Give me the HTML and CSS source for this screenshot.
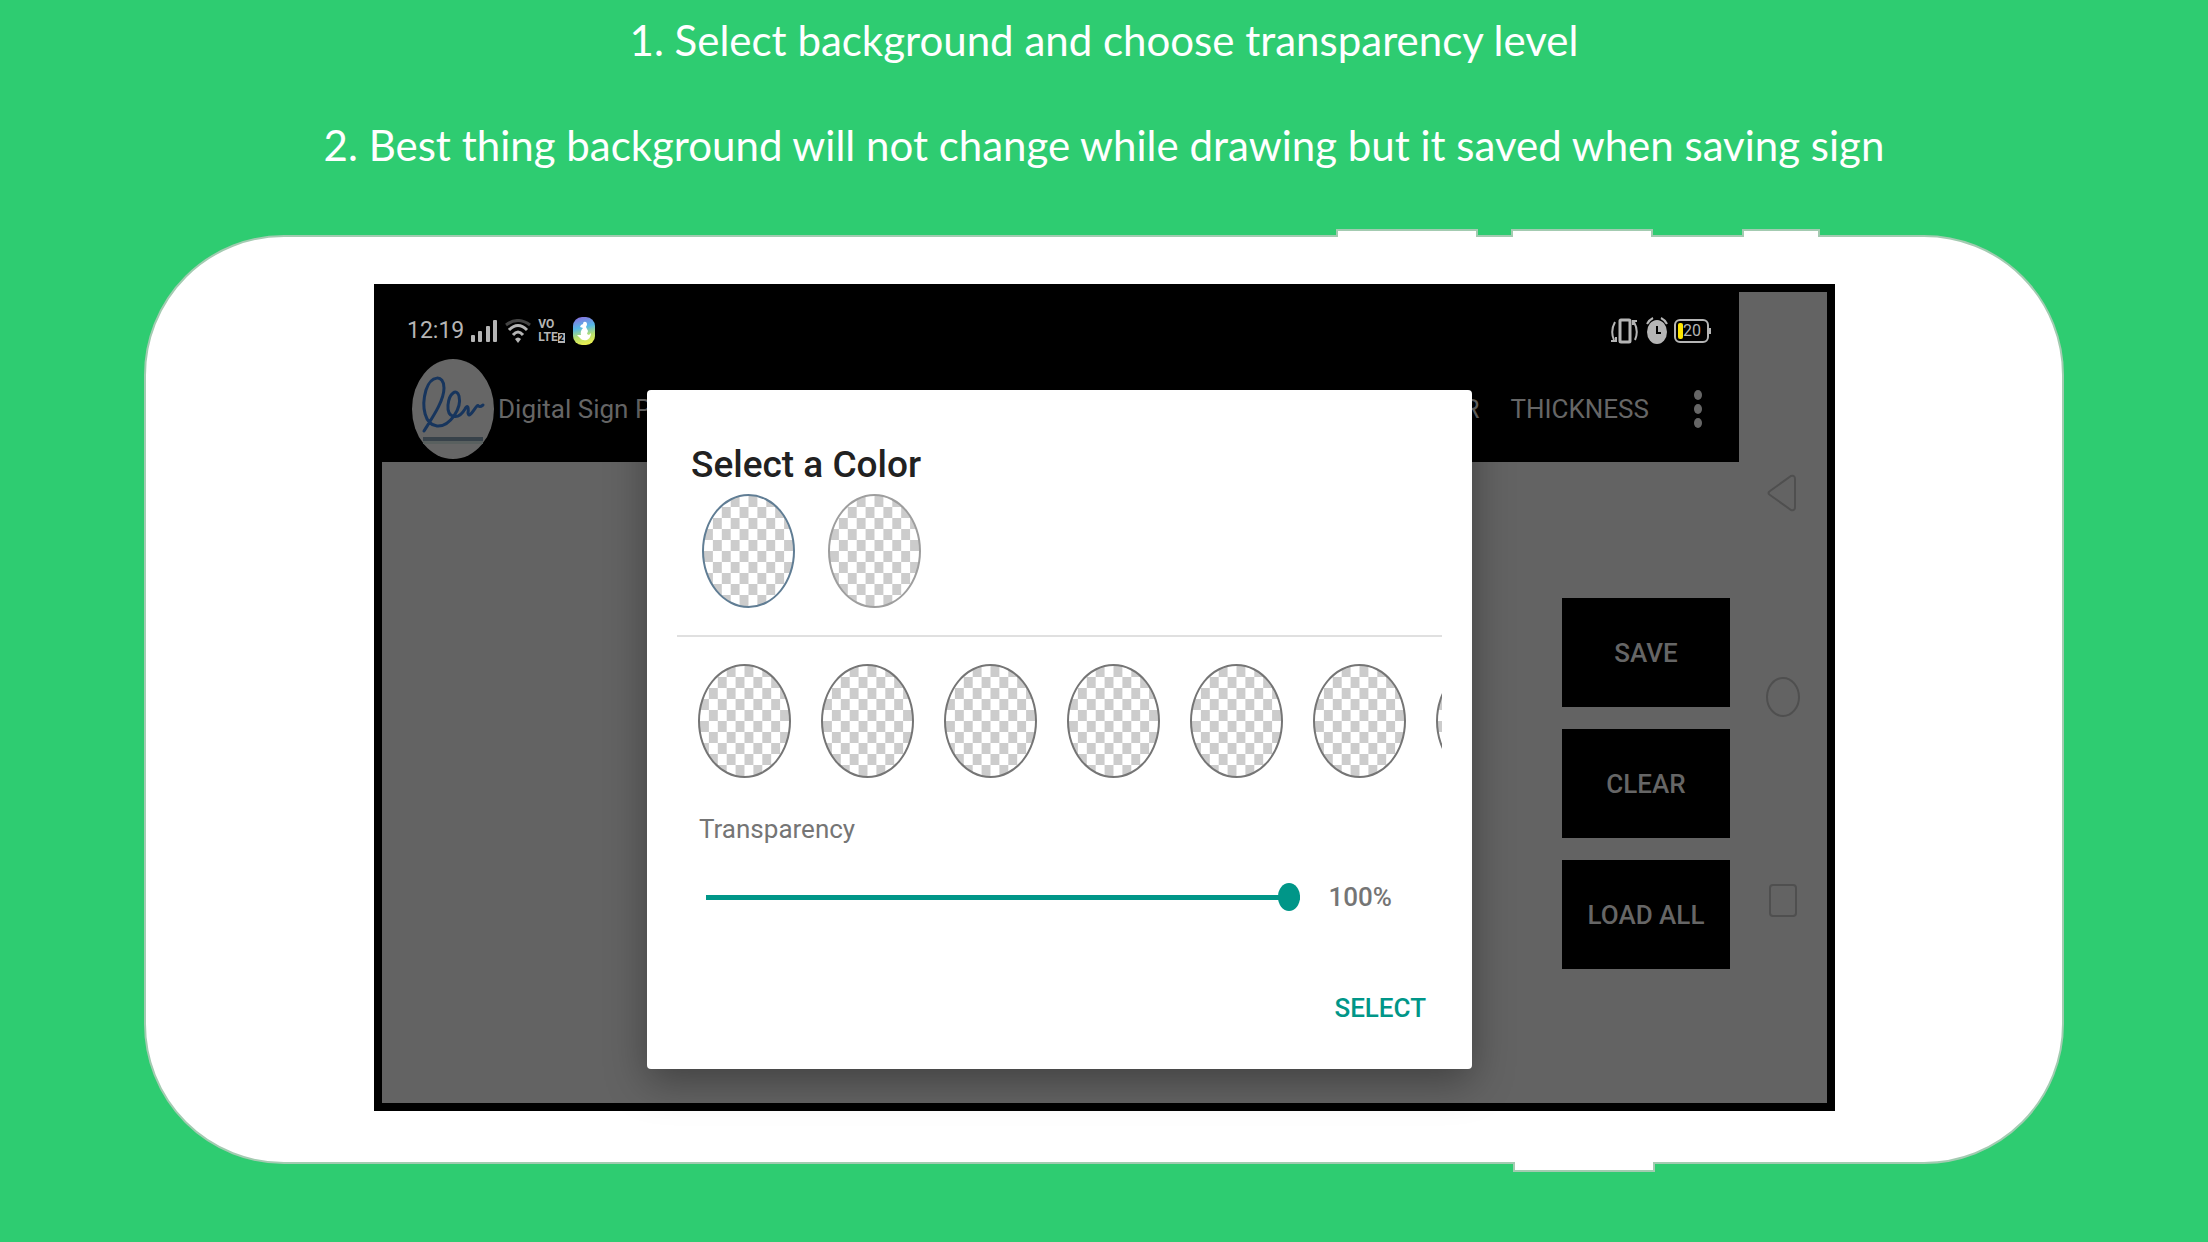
FILE: index.html
```html
<!DOCTYPE html>
<html lang="en">
  <head>
    <meta charset="utf-8">
    <title>Digital Sign Pad</title>
    <link rel="stylesheet" href="styles.css">
  </head>
  <body>
    <header class="intro">
      <p>1. Select background and choose transparency level</p>
      <p>2. Best thing background will not change while drawing but it saved when saving sign</p>
    </header>

    <main class="device">
      <div class="keys keys-top"><span class="key"></span><span class="key"></span><span class="key key-small"></span></div>
      <div class="phone">
        <div class="screen">
          <div class="app">
            <div class="statusbar">
              <span class="time">12:19</span>
              <svg class="signal" width="28" height="24" viewBox="0 0 28 24" fill="#b5b5b5">
                <rect x="1" y="16" width="4" height="7" rx="1"/><rect x="8" y="12" width="4" height="11" rx="1"/>
                <rect x="16" y="7" width="4" height="16" rx="1"/><rect x="23" y="1" width="4" height="22" rx="1"/>
              </svg>
              <svg class="wifi" width="26" height="24" viewBox="0 0 26 24" fill="none" stroke-width="3">
                <path stroke="#444" d="M1 6Q13-3 25 6"/>
                <path stroke="#b5b5b5" d="M4 11Q13 2 22 11M8 16Q13 10 18 16"/>
                <path fill="#b5b5b5" d="M10 20Q13 17 16 20L13 24z"/>
              </svg>
              <span class="volte">VO<br>LTE<b>2</b></span>
              <svg class="app-badge" width="22" height="28" viewBox="0 0 22 28">
                <defs>
                  <linearGradient id="rainbow" x1="0.2" y1="0" x2="0.4" y2="1">
                    <stop offset="0" stop-color="#8a6fe0"/><stop offset=".4" stop-color="#55b8e8"/>
                    <stop offset=".7" stop-color="#b4e070"/><stop offset="1" stop-color="#e8ee50"/>
                  </linearGradient>
                </defs>
                <rect width="22" height="28" rx="9" fill="url(#rainbow)"/>
                <path fill="#fff" d="M8 8 10 7Q10 4 13 5 15 7 13 10L15 14 14 17 16 18 18 16Q18 21 14 23 9 24 7 21L4 18 8 18Q7 14 10 11L7 10z"/>
              </svg>
              <span class="spacer"></span>
              <svg class="vibrate" width="27" height="26" viewBox="0 0 27 26" fill="none" stroke="#b5b5b5" stroke-width="2">
                <rect x="9" y="2" width="10" height="22" rx="1" stroke-width="3"/>
                <path d="M4 4Q-1 13 3 22M23 4Q28 13 24 22M0 23h5v-4M22 7V3h4"/>
              </svg>
              <svg class="alarm" width="22" height="28" viewBox="0 0 22 28">
                <ellipse cx="11" cy="15" rx="10" ry="12" fill="#b5b5b5"/>
                <path d="M1 7Q3 3 7 1M15 1Q19 3 21 7" fill="none" stroke="#b5b5b5" stroke-width="2"/>
                <path d="M11 9v7h4" fill="none" stroke="#000" stroke-width="2"/>
              </svg>
              <span class="battery">20</span>
            </div>

            <div class="toolbar">
              <svg class="logo" width="82" height="100" viewBox="0 0 82 100">
                <ellipse cx="41" cy="50" rx="41" ry="50" fill="#666"/>
                <path d="M12 72C18 62 32 43 32 29C32 15 19 16 14 31C9 48 13 66 25 67C38 68 50 49 47 37C45 29 37 34 36 46C35 59 46 62 53 50C55 46 57 47 56 54C57 60 62 50 65 47C67 45 66 50 71 46" fill="none" stroke="#17355d" stroke-width="3" stroke-linecap="round"/>
                <rect x="11" y="78" width="60" height="4" fill="#38424a"/>
                <rect x="11" y="82" width="60" height="3" fill="#59605f"/>
              </svg>
              <span class="title">Digital Sign Pad</span>
              <button class="menu">COLOR</button>
              <button class="menu">THICKNESS</button>
              <button class="more" aria-label="More options">
                <svg width="10" height="38" viewBox="0 0 10 38" fill="#666"><ellipse cx="5" cy="5" rx="4" ry="5"/><ellipse cx="5" cy="19" rx="4" ry="5"/><ellipse cx="5" cy="33" rx="4" ry="5"/></svg>
              </button>
            </div>

            <div class="canvas">
              <button class="action">SAVE</button>
              <button class="action">CLEAR</button>
              <button class="action">LOAD ALL</button>
            </div>

            <div class="overlay">
              <section class="dialog" role="dialog" aria-labelledby="dialog-title">
                <h1 id="dialog-title">Select a Color</h1>
                <div class="picked">
                  <button class="swatch active" aria-label="Current color"></button>
                  <button class="swatch light" aria-label="New color"></button>
                </div>
                <div class="palette">
                  <button class="swatch" aria-label="Color 1"></button>
                  <button class="swatch" aria-label="Color 2"></button>
                  <button class="swatch" aria-label="Color 3"></button>
                  <button class="swatch" aria-label="Color 4"></button>
                  <button class="swatch" aria-label="Color 5"></button>
                  <button class="swatch" aria-label="Color 6"></button>
                  <button class="swatch" aria-label="Color 7"></button>
                </div>
                <label class="slider-label" for="transparency">Transparency</label>
                <div class="slider">
                  <input type="range" id="transparency" min="0" max="100" value="100">
                  <output for="transparency">100%</output>
                </div>
                <button class="select">SELECT</button>
              </section>
            </div>
          </div>

          <nav class="navbar">
            <button aria-label="Back"><svg width="34" height="40" viewBox="0 0 34 40"><path d="M4 18 25 3Q29 2 29 6V34Q29 38 25 37L4 22Q1 20 4 18z"/></svg></button>
            <button aria-label="Home"><svg width="34" height="40" viewBox="0 0 34 40"><ellipse cx="17" cy="20" rx="16" ry="19"/></svg></button>
            <button aria-label="Recent"><svg width="34" height="40" viewBox="0 0 34 40"><rect x="4" y="4" width="26" height="31" rx="3"/></svg></button>
          </nav>
        </div>
      </div>
      <div class="keys keys-bottom"><span class="key"></span></div>
    </main>

    <script>
      (function() {
        var range = document.getElementById('transparency'),
            output = document.querySelector('output');

        range.oninput = function() {
          output.innerHTML = range.value + '%';
        }
      })();
    </script>
  </body>
</html>
```

FILE: styles.css
```css
* {
    margin: 0;
    padding: 0;
    box-sizing: border-box;
}
body {
    min-height: 100vh;
    background: #2ecc71;
    font-family: Roboto, sans-serif;
}
button {
    border: 0;
    background: none;
    font: inherit;
    color: inherit;
    cursor: pointer;
}
svg {
    display: block;
    flex: none;
}
.intro {
    display: flex;
    flex-direction: column;
    gap: 55px;
    padding: 15px 20px 59px;
    color: #fff;
    font: 42px/50px Lato, sans-serif;
    text-align: center;
}

/* phone body */
.device {
    margin: 0 144px;
}
.keys {
    position: relative;
    display: flex;
    justify-content: flex-end;
    gap: 33px;
    padding-right: 244px;
}
.key {
    width: 142px;
    height: 8px;
    border: 2px solid #a3cbb1;
    background: #fff;
}
.key-small {
    width: 78px;
    margin-left: 56px;
}
.keys-top {
    margin-bottom: -2px;
}
.keys-top .key {
    border-bottom: 0;
}
.keys-bottom {
    margin-top: -2px;
    padding-right: 409px;
}
.keys-bottom .key {
    height: 10px;
    border-top: 0;
}
.phone {
    padding: 47px 227px 51px 228px;
    border: 2px solid #a3cbb1;
    border-radius: 140px;
    background: #fff;
}
.screen {
    display: flex;
    border: 8px solid #000;
    background: #636363;
}
.app {
    position: relative;
    flex: 1;
    min-width: 0;
}

/* status bar */
.statusbar {
    display: flex;
    align-items: center;
    height: 64px;
    padding: 14px 30px 0 25px;
    background: #000;
    color: #b5b5b5;
}
.time {
    font-size: 23px;
    line-height: 28px;
}
.signal {
    margin-left: 6px;
}
.wifi {
    margin: 0 7px;
}
.volte {
    font-size: 12px;
    font-weight: 700;
    line-height: 13px;
}
.volte b {
    padding: 0 1px;
    background: #b5b5b5;
    color: #000;
    font-size: 9px;
}
.app-badge {
    margin-left: 8px;
}
.spacer {
    flex: 1;
}
.alarm {
    margin: 0 6px 0 8px;
}
.battery {
    position: relative;
    width: 35px;
    height: 24px;
    padding-left: 7px;
    border: 2px solid #b5b5b5;
    border-radius: 6px;
    font-size: 16px;
    line-height: 20px;
}
.battery::before {
    content: '';
    position: absolute;
    left: 2px;
    top: 2px;
    width: 5px;
    height: 16px;
    border-radius: 2px;
    background: #ffe600;
}
.battery::after {
    content: '';
    position: absolute;
    right: -4px;
    top: 7px;
    width: 2px;
    height: 6px;
    background: #b5b5b5;
}

/* title row */
.toolbar {
    display: flex;
    align-items: center;
    height: 106px;
    padding: 0 36px 0 30px;
    background: #000;
    color: #666;
    font-size: 26px;
}
.title {
    flex: 1;
    padding-left: 4px;
}
.menu {
    margin-right: 31px;
}
.more {
    margin-left: 13px;
}

.canvas {
    display: flex;
    flex-direction: column;
    align-items: flex-end;
    gap: 22px;
    padding: 136px 9px 134px;
}
.action {
    width: 168px;
    height: 109px;
    background: #000;
    color: #666;
    font-size: 26px;
    font-weight: 500;
}

/* color dialog */
.overlay {
    position: absolute;
    top: 64px;
    right: 0;
    bottom: 0;
    left: 0;
    display: flex;
    align-items: center;
    padding: 0 267px 0 265px;
}
.dialog {
    display: flex;
    flex-direction: column;
    flex: 1;
    min-width: 0;
    padding: 55px 30px 36px;
    border-radius: 4px;
    background: #fff;
    box-shadow: 0 12px 40px rgba(0, 0, 0, .35);
    color: #757575;
}
.dialog h1 {
    padding-left: 14px;
    color: #212121;
    font-size: 37px;
    font-weight: 500;
    line-height: 40px;
}
.picked {
    display: flex;
    gap: 33px;
    padding: 9px 25px 27px;
    border-bottom: 2px solid #e0e0e0;
}
.palette {
    display: flex;
    gap: 30px;
    padding: 27px 0 0 21px;
    overflow: hidden;
}
.swatch {
    flex: none;
    width: 93px;
    height: 114px;
    border: 2px solid #757575;
    border-radius: 50%;
    background: repeating-conic-gradient(#ccc 0 25%, #fff 0 50%) 0 0 / 20% 20%;
}
.swatch.active {
    border-color: #607d94;
}
.swatch.light {
    border-color: #9e9e9e;
}
.slider-label {
    padding: 34px 0 0 22px;
    font-size: 26px;
    line-height: 34px;
}
.slider {
    display: flex;
    align-items: center;
    gap: 29px;
    padding: 33px 50px 0 29px;
    font-size: 26px;
    font-weight: 500;
    line-height: 36px;
}
.slider input {
    flex: 1;
    min-width: 0;
    height: 28px;
    background: linear-gradient(#009688, #009688) center / 100% 5px no-repeat;
    -webkit-appearance: none;
    appearance: none;
}
.slider input::-webkit-slider-thumb {
    -webkit-appearance: none;
    width: 22px;
    height: 28px;
    border-radius: 50%;
    background: #009688;
}
.select {
    align-self: flex-end;
    height: 50px;
    margin-top: 68px;
    padding: 0 16px;
    color: #009688;
    font-size: 26px;
    font-weight: 500;
}

/* system buttons */
.navbar {
    display: flex;
    flex-direction: column;
    align-items: center;
    gap: 164px;
    width: 88px;
    padding-top: 181px;
}
.navbar svg {
    fill: none;
    stroke: #4f4f4f;
    stroke-width: 2;
}
```
